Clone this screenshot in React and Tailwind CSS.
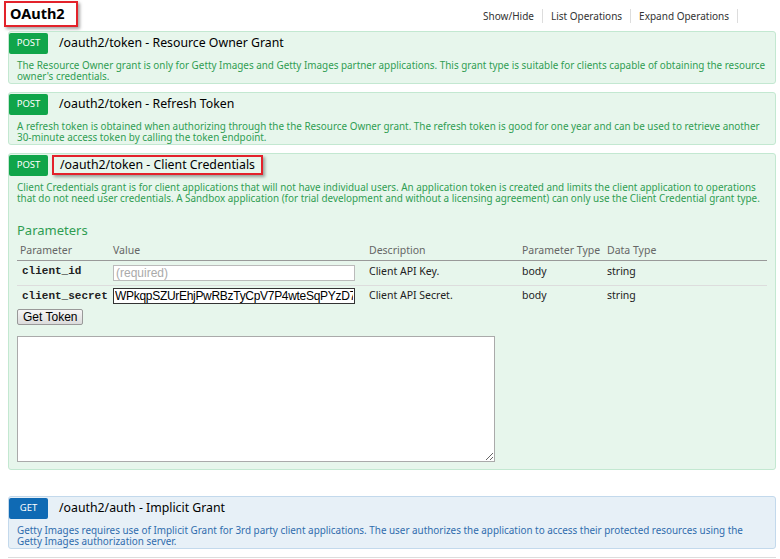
import { useState } from "react";

// Swagger-style operation list for the OAuth2 resource
const ops = [
    {
        method: "POST",
        path: "/oauth2/token - Resource Owner Grant",
        desc: "The Resource Owner grant is only for Getty Images and Getty Images partner applications. This grant type is suitable for clients capable of obtaining the resource owner's credentials.",
    },
    {
        method: "POST",
        path: "/oauth2/token - Refresh Token",
        desc: "A refresh token is obtained when authorizing through the the Resource Owner grant. The refresh token is good for one year and can be used to retrieve another 30-minute access token by calling the token endpoint.",
    },
];

function Badge({ method }) {
    const color = method === "GET" ? "bg-[#0f6ab4]" : "bg-[#10a54a]";
    return (
        <span className={`${color} w-[39px] h-[21px] flex items-center justify-center text-white text-[9.5px] rounded-[2px] shrink-0`}>
            {method}
        </span>
    );
}

function Operation({ method, path, desc, boxed, children, blue }) {
    const box = blue ? "bg-[#e7f0f7] border-[#c3d9ec]" : "bg-[#e7f6ec] border-[#c3e8d1]";
    const txt = blue ? "text-[#2f6cad] pr-[24px]" : "text-[#2f9d52] pr-[4px]";
    return (
        <div className={`${box} border rounded-[3px]`}>
            <div className="flex items-center h-[22px]">
                <Badge method={method} />
                {boxed ? (
                    <span className="ml-[4px] px-[6px] h-[20px] flex items-center border-2 border-[#e3222b] shadow-[2px_2px_3px_rgba(0,0,0,0.35)] text-[12.3px] text-black">
                        {path}
                    </span>
                ) : (
                    <span className="ml-[11px] text-[12.3px] text-black">{path}</span>
                )}
            </div>
            <p className={`${txt} text-[9.9px] leading-[11px] pl-[8px] pt-[6px] pb-[1px]`}>{desc}</p>
            {children}
        </div>
    );
}

export default function App() {
    const [secret, setSecret] = useState("WPkqpSZUrEhjPwRBzTyCpV7P4wteSqPYzD7P8ZNhSmKx");

    return (
        <div className="w-[780px] h-[559px] overflow-hidden bg-white pl-2 pr-1 font-['Noto_Sans',sans-serif]">
            {/* Resource header */}
            <div className="flex items-center justify-between h-[31px]">
                <span className="-ml-1 mt-[-3px] pl-[4px] pr-[11px] h-[26px] flex items-center border-2 border-[#e3222b] shadow-[2px_2px_3px_rgba(0,0,0,0.35)] text-[14.5px] font-bold text-black">
                    OAuth2
                </span>
                <div className="flex items-center text-[10px] text-[#333] mr-[38px]">
                    <span className="px-[8px] border-r border-[#ddd] leading-[14px]">Show/Hide</span>
                    <span className="px-[8px] border-r border-[#ddd] leading-[14px]">List Operations</span>
                    <span className="px-[8px] border-r border-[#ddd] leading-[14px]">Expand Operations</span>
                </div>
            </div>

            <div className="flex flex-col gap-[8px]">
                {ops.map((op) => (
                    <Operation key={op.path} {...op} />
                ))}

                <Operation
                    method="POST"
                    boxed
                    path="/oauth2/token - Client Credentials"
                    desc="Client Credentials grant is for client applications that will not have individual users. An application token is created and limits the client application to operations that do not need user credentials. A Sandbox application (for trial development and without a licensing agreement) can only use the Client Credential grant type."
                >
                    <div className="px-[8px] pt-[16px] pb-[7px]">
                        <h4 className="text-[13px] text-[#2f9d52] leading-[18px]">Parameters</h4>
                        <table className="w-full mt-[3px] text-[10.5px] border-collapse">
                            <thead>
                                <tr className="text-[#666] border-b border-[#999] text-left">
                                    <th className="font-normal w-[96px] h-[18px] pl-[3px]">Parameter</th>
                                    <th className="font-normal w-[256px]">Value</th>
                                    <th className="font-normal w-[153px]">Description</th>
                                    <th className="font-normal w-[85px]">Parameter Type</th>
                                    <th className="font-normal">Data Type</th>
                                </tr>
                            </thead>
                            <tbody className="text-[#222]">
                                <tr className="border-b border-[#ddd] h-[25px]">
                                    <td className="pl-[5px] pb-[2px] font-['Liberation_Mono',monospace] font-bold text-[11px]">client_id</td>
                                    <td>
                                        <input
                                            placeholder="(required)"
                                            className="block w-[242px] h-[16px] border border-[#bbb] bg-white px-[2px] text-[12px] font-['Liberation_Sans',sans-serif] placeholder:text-[#aaa]"
                                        />
                                    </td>
                                    <td className="pb-[2px]">Client API Key.</td>
                                    <td className="pb-[2px]">body</td>
                                    <td className="pb-[2px]">string</td>
                                </tr>
                                <tr className="h-[22px]">
                                    <td className="pl-[5px] font-['Liberation_Mono',monospace] font-bold text-[11px]">client_secret</td>
                                    <td>
                                        <input
                                            value={secret}
                                            onChange={(e) => setSecret(e.target.value)}
                                            className="block w-[242px] h-[16px] border border-[#333] bg-white px-[1px] text-[12px] tracking-[-0.3px] text-black font-['Liberation_Sans',sans-serif]"
                                        />
                                    </td>
                                    <td>Client API Secret.</td>
                                    <td>body</td>
                                    <td>string</td>
                                </tr>
                            </tbody>
                        </table>
                        <button className="block mt-[2px] h-[16px] px-[5px] text-[12px] leading-none font-['Liberation_Sans',sans-serif] text-black border border-[#999] rounded-[2px] bg-gradient-to-b from-[#f6f6f6] to-[#dcdcdc]">
                            Get Token
                        </button>
                        <textarea className="block mt-[11px] w-[478px] h-[126px] border border-[#aaa] bg-white" />
                    </div>
                </Operation>

                <div className="mt-[18px]">
                    <Operation
                        blue
                        method="GET"
                        path="/oauth2/auth - Implicit Grant"
                        desc="Getty Images requires use of Implicit Grant for 3rd party client applications. The user authorizes the application to access their protected resources using the Getty Images authorization server."
                    />
                </div>
                <div className="border-t border-[#ddd]" />
            </div>
        </div>
    );
}
